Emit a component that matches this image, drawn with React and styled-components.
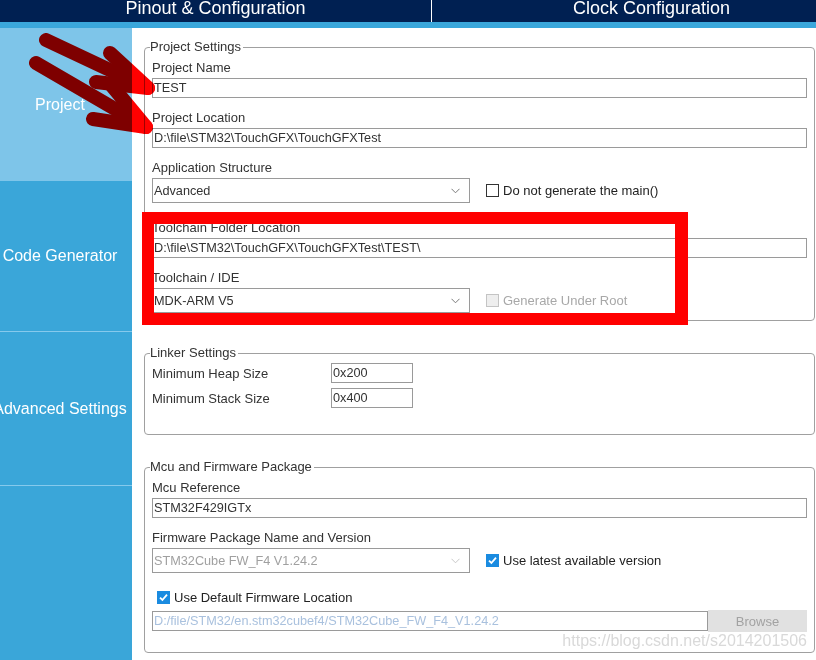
import React from "react";
import styled, { createGlobalStyle } from "styled-components";

const GlobalStyle = createGlobalStyle`
  html, body { margin: 0; padding: 0; background: #ffffff; overflow: hidden; }
  body { font-family: "Liberation Sans", Arial, sans-serif; }
  * { box-sizing: border-box; }
`;

const Root = styled.div`
  position: relative;
  width: 816px;
  height: 660px;
  overflow: hidden;
  background: #ffffff;
`;

const TabBar = styled.div`
  display: flex;
  height: 22px;
  background: #002052;
  overflow: hidden;
`;

const Tab = styled.div`
  flex: 0 0 ${(p) => p.$w}px;
  text-align: center;
  color: #ffffff;
  font-size: 18px;
  line-height: 17px;
  white-space: nowrap;
  border-left: ${(p) => (p.$divider ? "1px solid #ffffff" : "none")};
`;

const Stripe = styled.div`
  height: 6px;
  background: #3aa7db;
`;

const Body = styled.div`
  display: flex;
  height: 632px;
`;

const Sidebar = styled.div`
  flex: 0 0 132px;
  background: #3aa6d9;
  display: flex;
  flex-direction: column;
  overflow: hidden;
`;

const NavItem = styled.div`
  height: ${(p) => p.$h}px;
  flex: 0 0 auto;
  display: flex;
  align-items: center;
  justify-content: center;
  padding-right: 12px;
  background: ${(p) => (p.$active ? "#7ec5e9" : "#3aa6d9")};
  border-bottom: ${(p) => (p.$line ? "1px solid #86c9ec" : "none")};
  color: #ffffff;
  font-size: 16px;
  white-space: nowrap;
`;

const NavText = styled.span`
  flex: 0 0 auto;
`;

const Main = styled.div`
  flex: 1;
  padding: 11px 1px 0 12px;
  display: flex;
  flex-direction: column;
  gap: 24px;
`;

const Group = styled.fieldset`
  margin: 0;
  padding: 0 7px ${(p) => p.$pb}px 7px;
  border: 1px solid #a0a0a0;
  border-radius: 4px;
  min-width: 0;
`;

const Legend = styled.legend`
  font-size: 13px;
  line-height: 16px;
  color: #333333;
  padding: 0 2px 0 0;
  margin-left: -2px;
`;

const Stack = styled.div`
  display: flex;
  flex-direction: column;
  padding-top: ${(p) => p.$pt}px;
`;

const Field = styled.div`
  display: flex;
  flex-direction: column;
  margin-bottom: ${(p) => p.$mb}px;
`;

const Label = styled.div`
  font-size: 13px;
  line-height: 16px;
  height: 16px;
  margin-bottom: 2px;
  color: #333333;
  white-space: nowrap;
`;

const TextBox = styled.div`
  height: ${(p) => p.$h || 20}px;
  width: ${(p) => (p.$w ? p.$w + "px" : "auto")};
  flex: ${(p) => (p.$grow ? 1 : "0 0 auto")};
  border: 1px solid #9a9a9a;
  background: #ffffff;
  font-size: 12.7px;
  line-height: 18px;
  padding: 0 1px;
  color: ${(p) => (p.$disabled ? "#a9c1de" : "#333333")};
  white-space: nowrap;
  overflow: hidden;
`;

const Row = styled.div`
  display: flex;
  align-items: center;
  height: ${(p) => p.$h}px;
  margin-bottom: ${(p) => p.$mb || 0}px;
`;

const SelectBox = styled.div`
  width: 318px;
  height: 25px;
  border: 1px solid #9a9a9a;
  background: #ffffff;
  display: flex;
  align-items: center;
  justify-content: space-between;
  padding: 0 9px 0 1px;
  font-size: 12.7px;
  color: ${(p) => (p.$disabled ? "#a0a0a0" : "#333333")};
  white-space: nowrap;
`;

const Check = styled.div`
  display: flex;
  align-items: center;
  gap: 4px;
  margin-left: ${(p) => p.$ml}px;
  font-size: 13px;
  color: ${(p) => (p.$disabled ? "#a8a8a8" : "#222222")};
  white-space: nowrap;
`;

const Box = styled.span`
  width: 13px;
  height: 13px;
  flex: 0 0 13px;
  display: flex;
  align-items: center;
  justify-content: center;
  border: 1px solid
    ${(p) => (p.$checked ? "#1a8be0" : p.$disabled ? "#c4c4c4" : "#333333")};
  background: ${(p) =>
    p.$checked ? "#1a8be0" : p.$disabled ? "#eeeeee" : "#ffffff"};
`;

const LinkerRow = styled.div`
  display: flex;
  align-items: center;
  height: 20px;
  margin-bottom: 5px;
`;

const LinkerLabel = styled.div`
  width: 179px;
  font-size: 13px;
  color: #333333;
`;

const Browse = styled.div`
  width: 99px;
  height: 22px;
  background: #e1e1e1;
  color: #a2a2a2;
  font-size: 13px;
  display: flex;
  align-items: center;
  justify-content: center;
`;

const RedFrame = styled.div`
  position: absolute;
  left: 142px;
  top: 212px;
  width: 546px;
  height: 113px;
  border: 12px solid #ff0000;
  border-right-width: 13px;
  pointer-events: none;
`;

const Arrows = styled.svg`
  position: absolute;
  left: 0;
  top: 0;
  mix-blend-mode: multiply;
  pointer-events: none;
`;

const Watermark = styled.div`
  position: absolute;
  right: 9px;
  top: 631px;
  font-size: 16px;
  line-height: 20px;
  color: #d9d9d9;
  white-space: nowrap;
  pointer-events: none;
`;

const Chevron = ({ color = "#7a7a7a" }) => (
  <svg width="9" height="6" viewBox="0 0 9 6">
    <polyline points="0.5,0.8 4.5,4.8 8.5,0.8" fill="none" stroke={color} strokeWidth="1" />
  </svg>
);

const Tick = () => (
  <svg width="11" height="11" viewBox="0 0 11 11">
    <polyline points="2,5.6 4.4,8 9,2.6" fill="none" stroke="#ffffff" strokeWidth="1.8" />
  </svg>
);

const CheckItem = ({ checked, disabled, ml, children }) => (
  <Check $ml={ml} $disabled={disabled}>
    <Box $checked={checked} $disabled={disabled}>{checked && <Tick />}</Box>
    <span>{children}</span>
  </Check>
);

export default function App() {
  return (
    <Root>
      <GlobalStyle />
      <TabBar>
        <Tab $w={431}>Pinout &amp; Configuration</Tab>
        <Tab $w={440} $divider>Clock Configuration</Tab>
      </TabBar>
      <Stripe />
      <Body>
        <Sidebar>
          <NavItem $h={153} $active>
            <NavText>Project</NavText>
          </NavItem>
          <NavItem $h={151} $line>
            <NavText>Code Generator</NavText>
          </NavItem>
          <NavItem $h={154} $line>
            <NavText>Advanced Settings</NavText>
          </NavItem>
        </Sidebar>
        <Main>
          <Group $pb={7}>
            <Legend>Project Settings</Legend>
            <Stack $pt={5}>
              <Field $mb={12}>
                <Label>Project Name</Label>
                <TextBox>TEST</TextBox>
              </Field>
              <Field $mb={12}>
                <Label>Project Location</Label>
                <TextBox>D:\file\STM32\TouchGFX\TouchGFXTest</TextBox>
              </Field>
              <Field $mb={17}>
                <Label>Application Structure</Label>
                <Row $h={25}>
                  <SelectBox>
                    <span>Advanced</span>
                    <Chevron />
                  </SelectBox>
                  <CheckItem ml={16}>Do not generate the main()</CheckItem>
                </Row>
              </Field>
              <Field $mb={12}>
                <Label>Toolchain Folder Location</Label>
                <TextBox>D:\file\STM32\TouchGFX\TouchGFXTest\TEST\</TextBox>
              </Field>
              <Field $mb={0}>
                <Label>Toolchain / IDE</Label>
                <Row $h={25}>
                  <SelectBox>
                    <span>MDK-ARM V5</span>
                    <Chevron />
                  </SelectBox>
                  <CheckItem ml={16} disabled>Generate Under Root</CheckItem>
                </Row>
              </Field>
            </Stack>
          </Group>

          <Group $pb={21}>
            <Legend>Linker Settings</Legend>
            <Stack $pt={2}>
              <LinkerRow>
                <LinkerLabel>Minimum Heap Size</LinkerLabel>
                <TextBox $w={82}>0x200</TextBox>
              </LinkerRow>
              <LinkerRow>
                <LinkerLabel>Minimum Stack Size</LinkerLabel>
                <TextBox $w={82}>0x400</TextBox>
              </LinkerRow>
            </Stack>
          </Group>

          <Group $pb={20}>
            <Legend>Mcu and Firmware Package</Legend>
            <Stack $pt={5}>
              <Field $mb={12}>
                <Label>Mcu Reference</Label>
                <TextBox>STM32F429IGTx</TextBox>
              </Field>
              <Field $mb={14}>
                <Label>Firmware Package Name and Version</Label>
                <Row $h={25}>
                  <SelectBox $disabled>
                    <span>STM32Cube FW_F4 V1.24.2</span>
                    <Chevron color="#c8c8c8" />
                  </SelectBox>
                  <CheckItem ml={16} checked>Use latest available version</CheckItem>
                </Row>
              </Field>
              <Row $h={20} $mb={3}>
                <CheckItem ml={5} checked>Use Default Firmware Location</CheckItem>
              </Row>
              <Row $h={22}>
                <TextBox $grow $disabled>D:/file/STM32/en.stm32cubef4/STM32Cube_FW_F4_V1.24.2</TextBox>
                <Browse>Browse</Browse>
              </Row>
            </Stack>
          </Group>
        </Main>
      </Body>

      <RedFrame />
      <Arrows width="200" height="160" viewBox="0 0 200 160">
        <g fill="none" stroke="#ff0000" strokeWidth="14" strokeLinecap="round" strokeLinejoin="round">
          <polyline points="46,40 148,88" />
          <polyline points="110,53 148,88 96,82" />
          <polyline points="36,63 146,127" />
          <polyline points="112,86 146,127 93,119" />
        </g>
      </Arrows>
      <Watermark>https://blog.csdn.net/s2014201506</Watermark>
    </Root>
  );
}
